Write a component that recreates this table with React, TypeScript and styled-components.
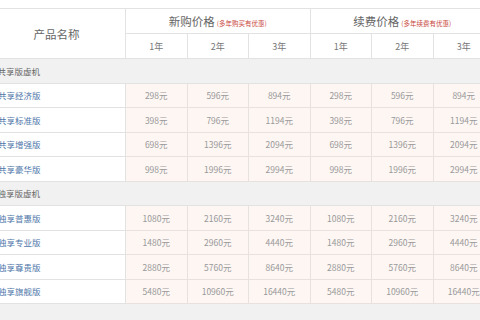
import React from "react";
import styled, { createGlobalStyle } from "styled-components";

const Global = createGlobalStyle`
  html, body { margin: 0; padding: 0; background: #f1f1f1; overflow: hidden; }
  body { width: 480px; height: 320px; font-family: "Noto Sans CJK SC", "Noto Sans", sans-serif; }
`;

const Page = styled.div`
  width: 480px;
  height: 320px;
  overflow: hidden;
`;

const Sheet = styled.div`
  background: #fff;
  padding-top: 8px;
  margin-left: -13px;
  width: 508px;
`;

const Table = styled.table`
  border-collapse: collapse;
  table-layout: fixed;
  width: 508px;
  color: #666;
`;

const Th = styled.th<{ $top?: boolean }>`
  border: 1px solid #e2e2e2;
  background: #fff;
  font-weight: normal;
  height: 24px;
  padding: 0;
  font-size: ${(p) => (p.$top ? "11.5px" : "9px")};
  color: ${(p) => (p.$top ? "#666" : "#777")};
  text-align: center;
`;

const Hint = styled.span`
  color: #c8453a;
  font-size: 6.5px;
  margin-left: 2px;
`;

const GroupCell = styled.td`
  background: #f1f1f1;
  border: 1px solid #e2e2e2;
  border-left: none;
  border-right: none;
  height: 23.5px;
  padding: 0 0 0 10px;
  font-size: 8.5px;
  color: #666;
`;

const NameCell = styled.td`
  background: #fff;
  border: 1px solid #e2e2e2;
  height: 23.5px;
  padding: 0 0 0 10px;
  font-size: 8.5px;
  color: #4f77aa;
`;

const PriceCell = styled.td`
  background: #fdf6f3;
  border: 1px solid #e8e2df;
  height: 23.5px;
  padding: 0;
  text-align: center;
  font-size: 8.5px;
  color: #999;
`;

type Row = { name: string; prices: number[] };
type Group = { title: string; rows: Row[] };

const groups: Group[] = [
  {
    title: "共享版虚机",
    rows: [
      { name: "共享经济版", prices: [298, 596, 894] },
      { name: "共享标准版", prices: [398, 796, 1194] },
      { name: "共享增强版", prices: [698, 1396, 2094] },
      { name: "共享豪华版", prices: [998, 1996, 2994] },
    ],
  },
  {
    title: "独享版虚机",
    rows: [
      { name: "独享普惠版", prices: [1080, 2160, 3240] },
      { name: "独享专业版", prices: [1480, 2960, 4440] },
      { name: "独享尊贵版", prices: [2880, 5760, 8640] },
      { name: "独享旗舰版", prices: [5480, 10960, 16440] },
    ],
  },
];

export default function App() {
  return (
    <Page>
      <Global />
      <Sheet>
        <Table>
          <colgroup>
            <col style={{ width: 138 }} />
            {[0, 1, 2, 3, 4, 5].map((i) => (
              <col key={i} />
            ))}
          </colgroup>
          <thead>
            <tr>
              <Th $top rowSpan={2}>产品名称</Th>
              <Th $top colSpan={3}>
                新购价格<Hint>(多年购买有优惠)</Hint>
              </Th>
              <Th $top colSpan={3}>
                续费价格<Hint>(多年续费有优惠)</Hint>
              </Th>
            </tr>
            <tr>
              {["1年", "2年", "3年", "1年", "2年", "3年"].map((y, i) => (
                <Th key={i}>{y}</Th>
              ))}
            </tr>
          </thead>
          <tbody>
            {groups.map((g) => (
              <React.Fragment key={g.title}>
                <tr>
                  <GroupCell colSpan={7}>{g.title}</GroupCell>
                </tr>
                {g.rows.map((r) => (
                  <tr key={r.name}>
                    <NameCell>{r.name}</NameCell>
                    {[...r.prices, ...r.prices].map((p, i) => (
                      <PriceCell key={i}>{p}元</PriceCell>
                    ))}
                  </tr>
                ))}
              </React.Fragment>
            ))}
          </tbody>
        </Table>
      </Sheet>
    </Page>
  );
}
